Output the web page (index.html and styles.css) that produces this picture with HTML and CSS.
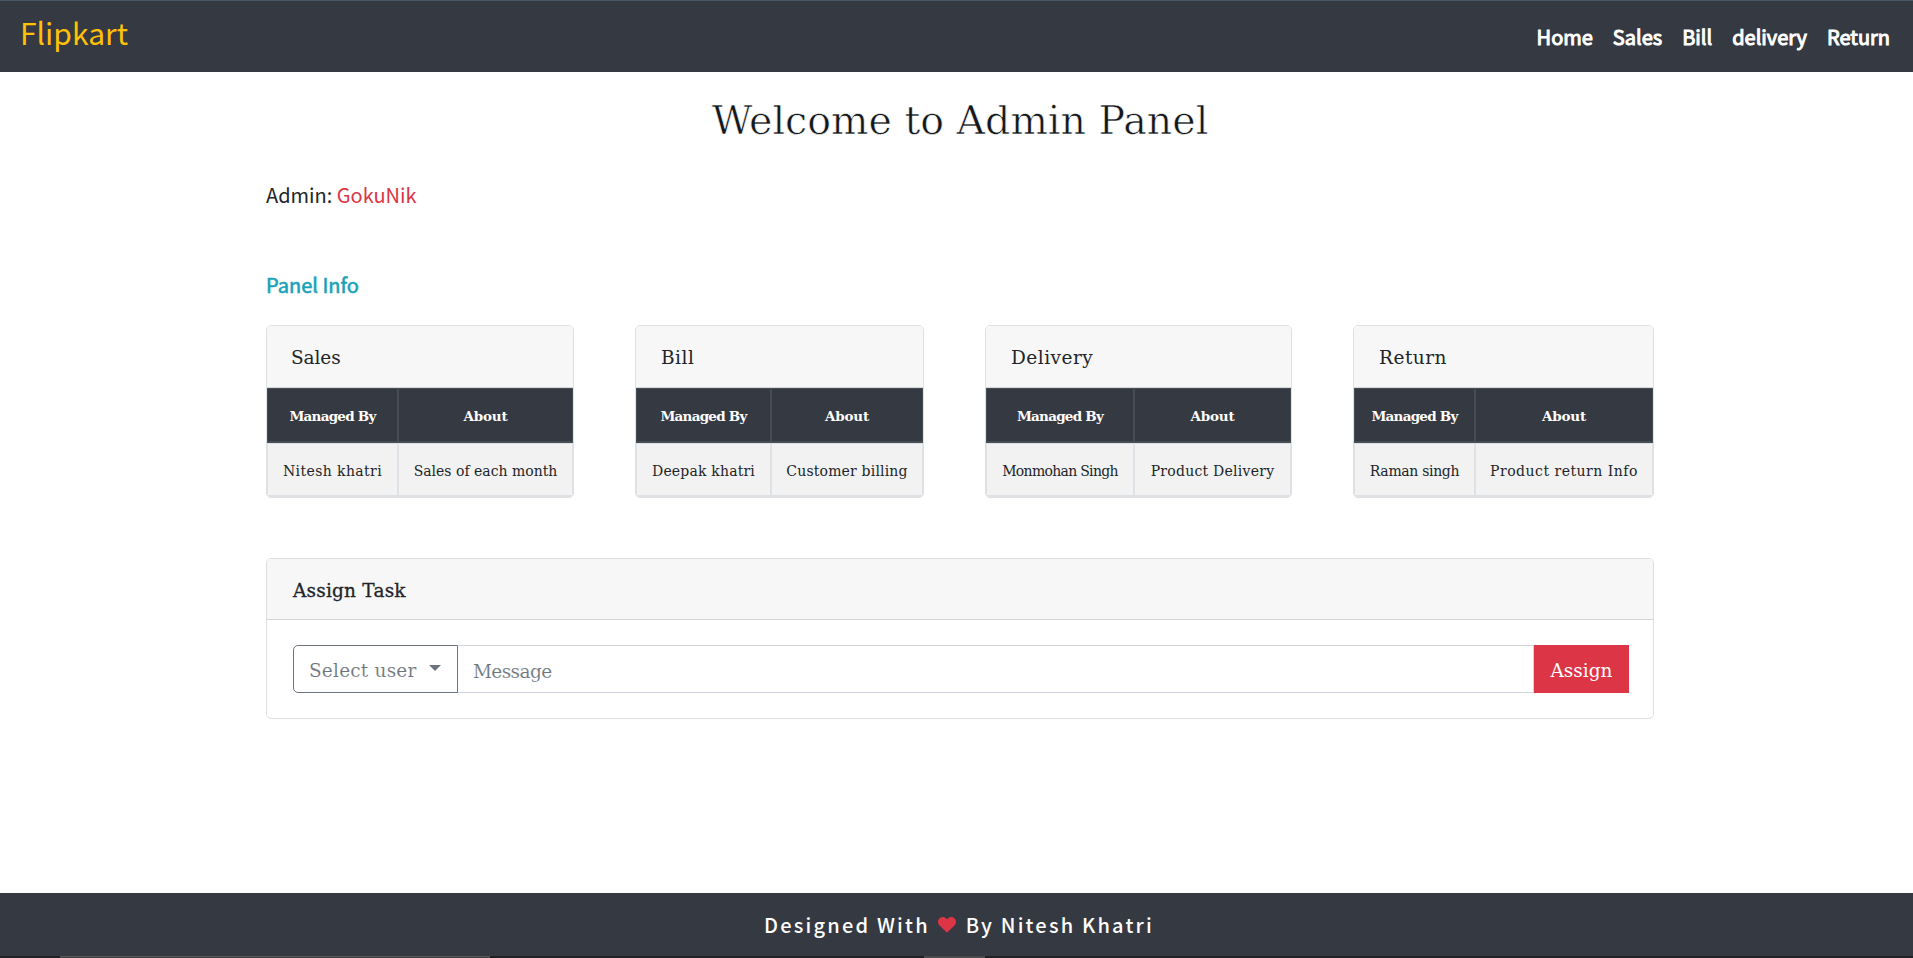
FILE: index.html
```html
<!DOCTYPE html>
<html lang="en">
<head>
<meta charset="utf-8">
<title>Admin Panel</title>
<link rel="stylesheet" href="styles.css">
</head>
<body>
<header class="navbar">
  <a class="brand">Flipkart</a>
  <nav class="nav-links"><a>Home</a><a>Sales</a><a>Bill</a><a>delivery</a><a>Return</a></nav>
</header>
<main class="container">
  <h1 class="title">Welcome to Admin Panel</h1>
  <p class="admin">Admin: <span class="admin-name">GokuNik</span></p>
  <h2 class="panel-info">Panel Info</h2>
  <section class="cards">
    <article class="card card-sales">
      <h3 class="card-header">Sales</h3>
      <div class="grid"><div class="th">Managed By</div><div class="th">About</div><div class="td">Nitesh khatri</div><div class="td">Sales of each month</div></div>
    </article>
    <article class="card card-bill">
      <h3 class="card-header">Bill</h3>
      <div class="grid"><div class="th">Managed By</div><div class="th">About</div><div class="td">Deepak khatri</div><div class="td">Customer billing</div></div>
    </article>
    <article class="card card-delivery">
      <h3 class="card-header">Delivery</h3>
      <div class="grid"><div class="th">Managed By</div><div class="th">About</div><div class="td">Monmohan Singh</div><div class="td">Product Delivery</div></div>
    </article>
    <article class="card card-return">
      <h3 class="card-header">Return</h3>
      <div class="grid"><div class="th">Managed By</div><div class="th">About</div><div class="td">Raman singh</div><div class="td">Product return Info</div></div>
    </article>
  </section>
  <section class="card task">
    <h3 class="card-header task-header">Assign Task</h3>
    <div class="task-body">
      <button class="select">Select user<span class="caret"></span></button>
      <div class="message">Message</div>
      <button class="assign">Assign</button>
    </div>
  </section>
</main>
<footer class="footer">
  <span>Designed With</span>
  <svg class="heart" viewBox="0 0 18 16"><path fill="#dc3545" d="M9 15.8 1.3 8.2C-.6 6.200-.3 3 1.600 1.300 3.700-.5 6.700-.2 8.500 1.700L9 2.200 9.500 1.700C11.300-.2 14.300-.5 16.400 1.300 18.300 3 18.600 6.200 16.700 8.200Z"/></svg>
  <span>By Nitesh Khatri</span>
</footer>
<div class="taskbar"><i class="tab-a"></i><i class="tab-b"></i></div>
</body>
</html>
```

FILE: styles.css
```css
* { box-sizing: border-box; }
body { margin: 0; height: 958px; overflow: hidden; display: flex; flex-direction: column; background: #fff; color: #212529; font-family: "Noto Sans CJK SC", "Noto Sans", sans-serif; }
h1, h2, h3, p { margin: 0; font-weight: 400; }
.navbar { flex: none; height: 72px; background: #353941; border-top: 1px solid #455a64; display: flex; justify-content: space-between; padding: 0 23px 0 20px; }
.brand { color: #ffc107; font-size: 30px; line-height: 40px; padding-top: 11px; }
.nav-links { display: flex; gap: 20px; color: #fff; font-size: 20px; line-height: 30px; padding-top: 21px; -webkit-text-stroke: 1px #fff; }
.container { flex: 1; width: 1388px; margin-left: 266px; }
.title { height: 90px; padding-top: 23px; text-align: center; font-family: "DejaVu Serif", serif; font-size: 39.5px; line-height: 50px; white-space: nowrap; letter-spacing: 0; color: #14181c; -webkit-text-stroke: 0.6px #fff; }
.admin { margin-top: 18px; font-size: 20px; line-height: 30px; }
.admin-name { color: #dc3545; }
.panel-info { margin-top: 60px; font-size: 20px; line-height: 30px; color: #17a2b8; -webkit-text-stroke: 0.6px #17a2b8; }
.cards { margin-top: 25px; display: flex; justify-content: space-between; font-family: "DejaVu Serif", serif; }
.card { border: 1px solid #dfdfdf; border-radius: 5px; overflow: hidden; }
.card-sales { width: 308px; }
.card-bill { width: 289px; }
.card-delivery { width: 307px; }
.card-return { width: 301px; }
.card-header { height: 62px; padding: 17px 0 0 25px; background: #f7f7f7; border-bottom: 1px solid #d5d6d8; font-family: "DejaVu Serif", serif; font-size: 18.5px; line-height: 30px; letter-spacing: 0.5px; }
.card-sales .card-header { padding-left: 24px; letter-spacing: -0.1px; }
.grid { display: grid; grid-template-rows: 55px 54px; }
.card-sales .grid { grid-template-columns: 131px 1fr; }
.card-bill .grid { grid-template-columns: 135px 1fr; }
.card-delivery .grid { grid-template-columns: 148px 1fr; }
.card-return .grid { grid-template-columns: 121px 1fr; }
.th, .td { display: flex; align-items: center; justify-content: center; white-space: nowrap; font-size: 14px; }
.th { background: #353941; color: #fff; font-weight: 700; border: 1px solid #454d55; border-bottom-width: 2px; font-size: 13.5px; letter-spacing: -0.75px; padding-top: 2px; }
.th:nth-child(2) { letter-spacing: -0.2px; }
.td { background: #f2f2f2; border: 1px solid #dee2e6; border-bottom-width: 2px; padding-top: 2px; }
.card-sales .td:nth-child(3) { letter-spacing: 0.4px; }
.card-bill .td { letter-spacing: 0.18px; }
.card-delivery .td:nth-child(3) { letter-spacing: -0.7px; }
.card-delivery .td:nth-child(4) { letter-spacing: 0.25px; }
.card-return .td:nth-child(3) { letter-spacing: -0.33px; }
.card-return .td:nth-child(4) { letter-spacing: 0.5px; }
.task { margin-top: 60px; height: 161px; }
.task-header { height: 61px; padding-left: 26px; letter-spacing: 0.2px; -webkit-text-stroke: 0.3px #212529; }
.task-body { display: flex; padding: 25px 24px 0 26px; font-family: "DejaVu Serif", serif; font-size: 18.5px; }
button { font: inherit; margin: 0; }
.select { width: 165px; height: 48px; display: flex; align-items: center; background: #fff; border: 1px solid #6c757d; border-radius: 5px 0 0 5px; color: #6c757d; padding: 3px 0 0 15px; white-space: nowrap; letter-spacing: 0.2px; -webkit-text-stroke: 0.15px #fff; }
.caret { margin: -5px 0 0 12px; border: 6px solid transparent; border-top-color: #6c757d; border-bottom: 0; }
.message { flex: 1; height: 48px; border: 1px solid #ced4da; border-width: 1px 1px 1px 0; color: #6c757d; line-height: 30px; padding: 11px 0 0 15px; letter-spacing: -0.6px; -webkit-text-stroke: 0.15px #fff; }
.assign { width: 95px; height: 48px; border: 0; background: #dc3545; color: #fff; padding: 3px 0 0; }
.footer { flex: none; height: 63px; background: #353941; color: #fff; display: flex; align-items: center; justify-content: center; font-size: 20px; line-height: 30px; letter-spacing: 2.2px; padding: 0 0 0 5px; font-weight: 500; }
.heart { width: 18px; height: 16px; margin: 0 10px 0 8px; }
.taskbar { flex: none; height: 2px; background: #202124; display: flex; }
.tab-a { margin-left: 60px; width: 430px; height: 2px; background: #3d3d3e; border-top: 1px solid #5a5a5a; }
.tab-b { margin-left: 434px; width: 61px; height: 2px; background: #4b4b4d; }
```
